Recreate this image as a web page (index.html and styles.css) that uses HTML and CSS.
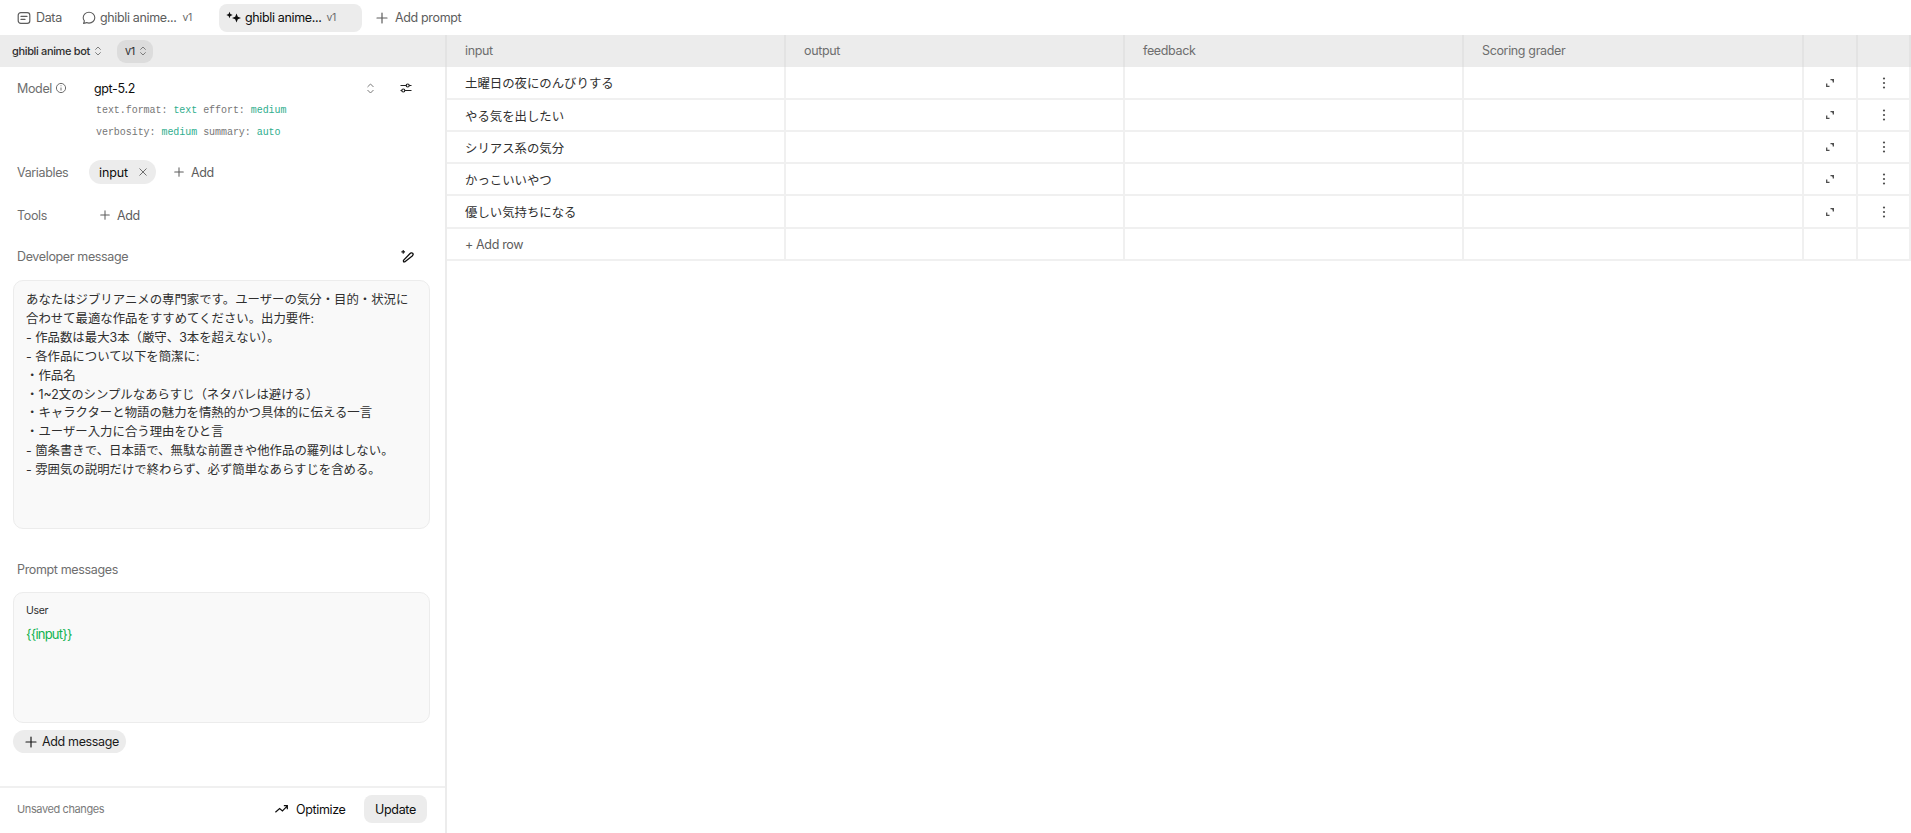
FILE: index.html
```html
<!DOCTYPE html>
<html lang="ja">
<head>
<meta charset="utf-8">
<title>Prompt evaluation</title>
<link rel="stylesheet" href="styles.css">
</head>
<body>
<svg class="defs" width="0" height="0" aria-hidden="true">
  <symbol id="plus" viewBox="0 0 14 14"><path d="M7 2v10M2 7h10" fill="none" stroke="currentColor" stroke-width="1.2" stroke-linecap="round"/></symbol>
  <symbol id="updown" viewBox="0 0 10 14"><path d="M2 5l3-3 3 3M2 9l3 3 3-3" fill="none" stroke="currentColor" stroke-width="1.1" stroke-linecap="round" stroke-linejoin="round"/></symbol>
  <symbol id="expand" viewBox="0 0 8 8"><path d="M4.500.7h2.800v2.800M.7 4.500v2.800h2.800" fill="none" stroke="currentColor" stroke-width="1.300"/><path d="M4.800 0H8v3.200z" fill="currentColor"/></symbol>
  <symbol id="dots" viewBox="0 0 4 12"><circle cx="2" cy="1.500" r="1.100" fill="currentColor"/><circle cx="2" cy="6" r="1.100" fill="currentColor"/><circle cx="2" cy="10.500" r="1.100" fill="currentColor"/></symbol>
</svg>
<nav class="tabs">
  <span class="tab tab-data">
    <svg class="ic14" viewBox="0 0 14 14"><rect x="1.200" y="1.700" width="11.600" height="10.600" rx="2.600" fill="none" stroke="currentColor" stroke-width="1.200"/><path d="M4 5.400h6M4 8.400h4" stroke="currentColor" stroke-width="1.200" stroke-linecap="round"/></svg>
    Data
  </span>
  <span class="tab tab-chat">
    <svg class="ic14" viewBox="0 0 14 14"><path d="M7 1.300c3.300 0 5.800 2.400 5.800 5.400S10.300 12.100 7 12.100c-.9 0-1.700-.2-2.400-.5L1.600 12.500l.8-2.700C1.600 8.900 1.200 7.800 1.200 6.700 1.200 3.700 3.700 1.300 7 1.300z" fill="none" stroke="currentColor" stroke-width="1.100" stroke-linejoin="round"/></svg>
    ghibli anime... <small class="ver">v1</small>
  </span>
  <span class="tab tab-active">
    <svg class="ic15" viewBox="0 0 16 14"><path d="M10.500 2.500l1.300 3.200 3.200 1.300-3.200 1.300-1.300 3.200-1.300-3.200L6 7l3.200-1.300z" fill="currentColor"/><path d="M3.500.8l.9 2.300 2.300.9-2.300.9-.9 2.300-.9-2.300L.3 4l2.300-.9z" fill="currentColor"/></svg>
    ghibli anime... <small class="ver">v1</small>
  </span>
  <span class="tab tab-add"><svg class="ic14"><use href="#plus"/></svg>Add prompt</span>
</nav>
<main class="workspace">
  <aside class="panel">
    <header class="panel-head">
      <span class="bot-name">ghibli anime bot <svg class="ud"><use href="#updown"/></svg></span>
      <span class="ver-pill">v1 <svg class="ud"><use href="#updown"/></svg></span>
    </header>
    <div class="panel-body">
      <section class="model">
        <div class="model-top">
          <span class="label label-model">Model
            <svg class="ic-info" viewBox="0 0 12 12"><circle cx="6" cy="6" r="4.600" fill="none" stroke="currentColor" stroke-width="1"/><path d="M6 5.500v3M6 3.400v.8" stroke="currentColor" stroke-width="1"/></svg>
          </span>
          <span class="model-name">gpt-5.2</span>
          <svg class="ud ud-model"><use href="#updown"/></svg>
          <svg class="ic-sliders" viewBox="0 0 14 14"><path d="M1.500 4.500h6M10 4.500h2.500M1.500 9.500H3M5.700 9.500h6.800" stroke="currentColor" stroke-width="1.200"/><circle cx="8.700" cy="4.500" r="1.500" fill="none" stroke="currentColor" stroke-width="1.200"/><circle cx="4.300" cy="9.500" r="1.500" fill="none" stroke="currentColor" stroke-width="1.200"/></svg>
        </div>
        <p class="mono mono-first">text.format: <b>text</b> effort: <b>medium</b></p>
        <p class="mono">verbosity: <b>medium</b> summary: <b>auto</b></p>
      </section>
      <section class="row row-vars">
        <span class="label">Variables</span>
        <span class="chip">input <svg class="ic-x" viewBox="0 0 10 10"><path d="M1.500 1.500l7 7M8.500 1.500l-7 7" stroke="currentColor" stroke-width="1"/></svg></span>
        <span class="add"><svg class="ic12"><use href="#plus"/></svg>Add</span>
      </section>
      <section class="row row-tools">
        <span class="label">Tools</span>
        <span class="add"><svg class="ic12"><use href="#plus"/></svg>Add</span>
      </section>
      <div class="dev-head">
        <span class="label">Developer message</span>
        <svg class="ic-wand" viewBox="0 0 14 14"><path d="M4.600 12l-1.300-.1-.1-1.300L9.200 4.400c.9-.9 2-1 2.600-.4s.5 1.700-.4 2.600z" fill="none" stroke="currentColor" stroke-width="1.200" stroke-linejoin="round"/><path d="M3 1v3.400M1.300 2.700h3.400" stroke="currentColor" stroke-width="1"/></svg>
      </div>
      <div class="msg-box dev-box">あなたはジブリアニメの専門家です。ユーザーの気分・目的・状況に合わせて最適な作品をすすめてください。出力要件:
- 作品数は最大3本（厳守、3本を超えない）。
- 各作品について以下を簡潔に:
・作品名
・1~2文のシンプルなあらすじ（ネタバレは避ける）
・キャラクターと物語の魅力を情熱的かつ具体的に伝える一言
・ユーザー入力に合う理由をひと言
- 箇条書きで、日本語で、無駄な前置きや他作品の羅列はしない。
- 雰囲気の説明だけで終わらず、必ず簡単なあらすじを含める。</div>
      <div class="prompt-head"><span class="label">Prompt messages</span></div>
      <div class="msg-box user-box">
        <div class="role">User</div>
        <div class="var-text">{{input}}</div>
      </div>
      <span class="add-msg"><svg class="ic14"><use href="#plus"/></svg>Add message</span>
    </div>
    <footer class="panel-foot">
      <span class="unsaved">Unsaved changes</span>
      <span class="optimize">
        <svg class="ic-trend" viewBox="0 0 16 12"><path d="M1.500 9.500L6 5.500l3 2.500 5-5M10.500 2.500h3.700v3.700" fill="none" stroke="currentColor" stroke-width="1.300"/></svg>
        Optimize
      </span>
      <span class="update">Update</span>
    </footer>
  </aside>
  <section class="table-wrap">
    <div class="grid">
      <div class="th">input</div><div class="th">output</div><div class="th">feedback</div><div class="th">Scoring grader</div><div class="th"></div><div class="th"></div>

      <div class="td td-input">土曜日の夜にのんびりする</div><div class="td"></div><div class="td"></div><div class="td"></div><div class="td td-ic"><svg class="ic-exp"><use href="#expand"/></svg></div><div class="td td-ic"><svg class="ic-dots"><use href="#dots"/></svg></div>

      <div class="td td-input">やる気を出したい</div><div class="td"></div><div class="td"></div><div class="td"></div><div class="td td-ic"><svg class="ic-exp"><use href="#expand"/></svg></div><div class="td td-ic"><svg class="ic-dots"><use href="#dots"/></svg></div>

      <div class="td td-input">シリアス系の気分</div><div class="td"></div><div class="td"></div><div class="td"></div><div class="td td-ic"><svg class="ic-exp"><use href="#expand"/></svg></div><div class="td td-ic"><svg class="ic-dots"><use href="#dots"/></svg></div>

      <div class="td td-input">かっこいいやつ</div><div class="td"></div><div class="td"></div><div class="td"></div><div class="td td-ic"><svg class="ic-exp"><use href="#expand"/></svg></div><div class="td td-ic"><svg class="ic-dots"><use href="#dots"/></svg></div>

      <div class="td td-input">優しい気持ちになる</div><div class="td"></div><div class="td"></div><div class="td"></div><div class="td td-ic"><svg class="ic-exp"><use href="#expand"/></svg></div><div class="td td-ic"><svg class="ic-dots"><use href="#dots"/></svg></div>

      <div class="td td-add">+ Add row</div><div class="td"></div><div class="td"></div><div class="td"></div><div class="td"></div><div class="td"></div>
    </div>
  </section>
</main>
</body>
</html>
```
FILE: styles.css
```css
* { box-sizing: border-box; }
html, body { margin: 0; height: 100%; }
body {
  width: 1911px;
  height: 833px;
  overflow: hidden;
  background: #fff;
  color: #0d0d0d;
  font-family: Inter, "Noto Sans CJK JP", sans-serif;
  font-size: 12.5px;
  letter-spacing: -0.35px;
  display: flex;
  flex-direction: column;
}
.defs { position: absolute; }
svg { display: block; flex: none; }
.ic14 { width: 14px; height: 14px; }
.ic15 { width: 16px; height: 14px; }
.ic12 { width: 12px; height: 12px; }

/* tabs */
.tabs { height: 35px; flex: none; display: flex; align-items: center; color: #5d5d5d; }
.tab { display: flex; align-items: center; gap: 4px; height: 28px; white-space: nowrap; }
.tab-data { margin-left: 17px; width: 65px; gap: 5px; }
.tab-chat { width: 137px; }
.tab-active { width: 143px; background: #ececec; border-radius: 8px; padding-left: 7px; color: #0d0d0d; gap: 3px; }
.tab-add { margin-left: 13px; gap: 6px; }
.ver { font-size: 10.5px; color: #6b6b6b; margin-left: 2px; }

.workspace { flex: 1; display: flex; min-height: 0; }

/* left panel */
.panel { width: 447px; flex: none; border-right: 2px solid #ececec; display: flex; flex-direction: column; }
.panel-head { height: 32px; flex: none; background: #ececec; margin-right: -2px; border-right: 2px solid #e3e3e3; display: flex; align-items: center; padding-left: 12px; font-size: 11px; font-weight: 500; color: #2f2f2f; }
.bot-name { display: flex; align-items: center; gap: 4px; width: 105px; }
.ver-pill { display: flex; align-items: center; gap: 4px; background: #dcdcdc; border-radius: 9px; height: 23px; width: 36px; padding-left: 8px; font-weight: 400; }
.ud { width: 8px; height: 12px; color: #6e6e6e; }
.panel-body { flex: 1; padding: 0 0 0 13px; display: flex; flex-direction: column; align-items: flex-start; min-height: 0; }
.label { color: #6e6e6e; }
.model { width: 417px; padding-top: 12px; }
.model-top { display: flex; align-items: center; height: 18px; }
.label-model { width: 81px; padding-left: 4px; display: flex; align-items: center; gap: 3px; }
.ic-info { width: 12px; height: 12px; color: #6e6e6e; }
.model-name { width: 272px; color: #0d0d0d; }
.ud-model { color: #777; width: 9px; height: 13px; }
.ic-sliders { width: 14px; height: 14px; margin-left: 24px; color: #222; }
.mono { margin: 0 0 0 83px; font-family: "Liberation Mono", monospace; font-size: 10px; letter-spacing: -0.05px; line-height: 22px; color: #767676; white-space: nowrap; }
.mono-first { margin-top: 3px; }
.mono b { font-weight: 400; color: #2fae8e; }
.row { display: flex; align-items: center; height: 24px; }
.row .label { padding-left: 4px; width: 76px; }
.row-vars { margin-top: 16px; }
.row-tools { margin-top: 19px; }
.chip { display: flex; align-items: center; gap: 10px; background: #ececec; border-radius: 12px; height: 24px; padding: 0 10px; color: #0d0d0d; width: 67px; letter-spacing: -0.1px; }
.ic-x { width: 10px; height: 10px; color: #6e6e6e; }
.add { display: flex; align-items: center; gap: 6px; height: 24px; padding: 0 10px; color: #5d5d5d; }
.row-vars .add { margin-left: 7px; }
.dev-head { width: 417px; height: 18px; margin-top: 20px; display: flex; align-items: center; justify-content: space-between; padding: 0 15px 0 4px; }
.ic-wand { width: 15px; height: 15px; }
.msg-box { width: 417px; background: #f9f9f9; border: 1px solid #ececec; border-radius: 10px; padding: 12px; }
.dev-box { height: 249px; margin-top: 15px; padding-top: 10px; font-size: 12.4px; line-height: 18.9px; color: #2f2f2f; white-space: pre-wrap; letter-spacing: 0; }
.prompt-head { height: 18px; margin-top: 33px; padding-left: 4px; }
.user-box { height: 131px; margin-top: 12px; padding-top: 11px; }
.role { font-size: 10.5px; color: #2f2f2f; line-height: 14px; }
.var-text { margin-top: 7px; color: #10b350; font-size: 13px; line-height: 18px; letter-spacing: -0.8px; }
.add-msg { display: flex; align-items: center; gap: 4px; height: 23px; width: 113px; margin-top: 7px; padding-left: 11px; background: #ececec; border-radius: 12px; color: #1a1a1a; }
.panel-foot { height: 47px; flex: none; border-top: 2px solid #f0f0f0; display: flex; align-items: center; padding: 0 0 3px 17px; }
.unsaved { font-size: 11px; color: #7a7a7a; width: 257px; letter-spacing: -0.4px; }
.optimize { display: flex; align-items: center; gap: 7px; width: 90px; }
.ic-trend { width: 15px; height: 12px; }
.update { width: 63px; height: 28px; background: #ececec; border-radius: 8px; display: flex; align-items: center; justify-content: center; }

/* table */
.table-wrap { flex: 1; min-width: 0; }
.grid { display: grid; grid-template-columns: 339px 339px 339px 340px 54px 1fr; grid-template-rows: 32px 33px 32px 32px 32px 33px 32px; }
.th { background: #ececec; border-right: 2px solid #e3e3e3; padding: 0 0 1px 18px; display: flex; align-items: center; color: #6e6e6e; }
.td { border-right: 2px solid #f0f0f0; border-bottom: 2px solid #f0f0f0; display: flex; align-items: center; padding-left: 18px; color: #2f2f2f; }
.td-input { font-size: 12.4px; letter-spacing: 0; padding-top: 1px; }
.td-add { color: #5d5d5d; }
.td-ic { padding: 0; justify-content: center; color: #4f4f4f; }
.ic-exp { width: 8px; height: 8px; }
.ic-dots { width: 4px; height: 12px; }
```
